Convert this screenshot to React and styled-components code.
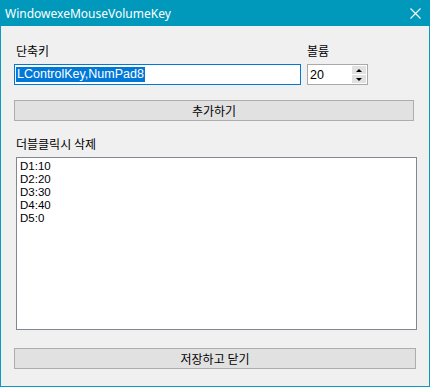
import { createGlobalStyle, styled } from 'styled-components'

const GlobalStyle = createGlobalStyle`
  html, body {
    margin: 0;
    padding: 0;
    background: #ffffff;
  }
`

const Window = styled.div`
  width: 430px;
  height: 387px;
  box-sizing: border-box;
  border: 1px solid #0a9cc0;
  border-top: none;
  display: flex;
  flex-direction: column;
  background: #f0f0f0;
  font-family: "Noto Sans CJK KR", "Noto Sans", sans-serif;
`

const TitleBar = styled.div`
  height: 26px;
  margin: 0 -1px;
  background: #0099bc;
  color: #ffffff;
  display: flex;
  align-items: center;
  justify-content: space-between;
  padding: 0 9px 0 5px;
  font-family: "Noto Sans", "Open Sans", sans-serif;
  font-size: 12px;
  flex-shrink: 0;
`

const Body = styled.div`
  flex: 1;
  display: flex;
  flex-direction: column;
  padding: 17px 13px 0 13px;
`

const FieldRow = styled.div`
  display: grid;
  grid-template-columns: 287px 61px;
  column-gap: 6px;
  row-gap: 6px;
`

const Label = styled.label`
  display: block;
  font-size: 12px;
  line-height: 15px;
  color: #000000;
  padding-left: ${({ $indent }) => $indent || 0}px;
  margin-top: ${({ $top }) => $top || 0}px;
`

const TextBox = styled.div`
  height: 21px;
  box-sizing: border-box;
  background: #ffffff;
  border: 1px solid ${({ $focused }) => ($focused ? '#0078d7' : '#a9a9a9')};
  display: flex;
  align-items: center;
  padding-left: ${({ $pad }) => $pad || 1}px;
  font-family: "Liberation Sans", Arial, sans-serif;
  font-size: 12.5px;
  color: #000000;
  position: relative;
`

const Selected = styled.span`
  background: #0078d7;
  color: #ffffff;
  line-height: 15px;
  padding: 0 1px;
`

const SpinButtons = styled.div`
  position: absolute;
  right: 1px;
  top: 1px;
  bottom: 1px;
  width: 14px;
  display: flex;
  flex-direction: column;
  gap: 1px;
`

const SpinButton = styled.div`
  flex: 1;
  background: #e1e1e1;
  display: flex;
  align-items: center;
  justify-content: center;
`

const Arrow = styled.div`
  width: 0;
  height: 0;
  border-left: 3px solid transparent;
  border-right: 3px solid transparent;
  ${({ $up }) => ($up ? 'border-bottom: 3px solid #000;' : 'border-top: 3px solid #000;')}
`

const Button = styled.button`
  display: block;
  box-sizing: border-box;
  width: ${({ $width }) => $width}px;
  height: 21px;
  margin-top: ${({ $top }) => $top}px;
  background: #e1e1e1;
  border: 1px solid #adadad;
  font-family: "Noto Sans CJK KR", sans-serif;
  font-size: 12px;
  color: #000000;
  padding: 0;
  line-height: 19px;
`

const ListBox = styled.div`
  width: 401px;
  height: 173px;
  box-sizing: border-box;
  margin: 6px 0 0 2px;
  background: #ffffff;
  border: 1px solid #828790;
  padding: 2px 3px;
  font-family: "Liberation Sans", Arial, sans-serif;
  font-size: 11.5px;
  line-height: 13px;
  color: #000000;
`

const items = ['D1:10', 'D2:20', 'D3:30', 'D4:40', 'D5:0']

export default function App() {
  return (
    <>
      <GlobalStyle />
      <Window>
        <TitleBar>
          <span>WindowexeMouseVolumeKey</span>
          <svg width="11" height="11" viewBox="0 0 11 11">
            <path d="M0.5 0.5 L10.5 10.5 M10.5 0.5 L0.5 10.5" stroke="#fff" strokeWidth="1.1" />
          </svg>
        </TitleBar>
        <Body>
          <FieldRow>
            <Label $indent={2}>단축키</Label>
            <Label>볼륨</Label>
            <TextBox $focused>
              <Selected>LControlKey,NumPad8</Selected>
            </TextBox>
            <TextBox $pad={2}>
              20
              <SpinButtons>
                <SpinButton><Arrow $up /></SpinButton>
                <SpinButton><Arrow /></SpinButton>
              </SpinButtons>
            </TextBox>
          </FieldRow>
          <Button $width={400} $top={15}>추가하기</Button>
          <Label $indent={2} $top={15}>더블클릭시 삭제</Label>
          <ListBox>
            {items.map((item) => (
              <div key={item}>{item}</div>
            ))}
          </ListBox>
          <Button $width={402} $top={18}>저장하고 닫기</Button>
        </Body>
      </Window>
    </>
  )
}
